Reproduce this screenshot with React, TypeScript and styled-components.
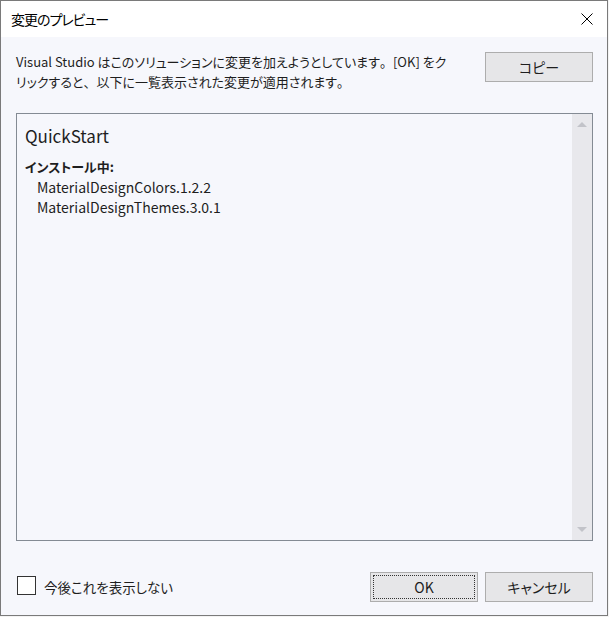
import * as React from 'react';
import styled, { createGlobalStyle } from 'styled-components';

const GlobalStyle = createGlobalStyle`
  html, body {
    margin: 0;
    padding: 0;
    background: #f3f3f3;
  }
  body {
    font-family: "Noto Sans CJK JP", "Noto Sans", sans-serif;
    font-feature-settings: "palt";
    color: #1e1e1e;
  }
`;

const Window = styled.div`
  box-sizing: border-box;
  width: 608px;
  height: 616px;
  border: 1px solid #7a7a7a;
  background: #f6f7fc;
  display: flex;
  flex-direction: column;
`;

const TitleBar = styled.div`
  height: 36px;
  background: #ffffff;
  display: flex;
  align-items: center;
  justify-content: space-between;
  padding-left: 10px;
`;

const Title = styled.div`
  font-size: 14px;
  letter-spacing: -1px;
  color: #000;
`;

const CloseButton = styled.div`
  width: 40px;
  height: 36px;
  display: flex;
  align-items: center;
  justify-content: center;
`;

const Body = styled.div`
  flex: 1;
  display: flex;
  flex-direction: column;
  padding: 16px 14px 14px 15px;
`;

const TopRow = styled.div`
  display: flex;
  justify-content: space-between;
  align-items: flex-start;
  height: 60px;
`;

const Description = styled.div`
  font-size: 13px;
  line-height: 20px;
  margin-top: -1px;
`;

// full-width punctuation, like the dialog font
const Punct = styled.span`
  font-feature-settings: normal;
`;

const Button = styled.button<{ focused?: boolean }>`
  box-sizing: border-box;
  width: 108px;
  height: 30px;
  border: 1px solid #adadad;
  background: #e6e6e8;
  font-family: inherit;
  font-feature-settings: "palt";
  font-size: 14px;
  color: #1e1e1e;
  padding: 0;
  outline: ${(p) => (p.focused ? '1px dotted #333' : 'none')};
  outline-offset: -4px;
`;

const Panel = styled.div`
  box-sizing: border-box;
  height: 428px;
  border: 1px solid #848b94;
  display: flex;
`;

const PanelContent = styled.div`
  flex: 1;
  padding: 9px 8px;
`;

const ProjectName = styled.div`
  font-size: 17px;
  line-height: 26px;
  margin-bottom: 8px;
`;

const SectionLabel = styled.div`
  font-size: 13px;
  font-weight: bold;
  line-height: 20px;
`;

const PackageItem = styled.div`
  font-size: 14px;
  line-height: 20px;
  padding-left: 12px;
`;

const ScrollBar = styled.div`
  width: 20px;
  background: #e8e8ec;
  display: flex;
  flex-direction: column;
  justify-content: space-between;
  align-items: center;
  padding: 8px 0;
`;

const Arrow = styled.div<{ down?: boolean }>`
  width: 0;
  height: 0;
  border-left: 5px solid transparent;
  border-right: 5px solid transparent;
  ${(p) =>
    p.down ? 'border-top: 5px solid #c2c3c9;' : 'border-bottom: 5px solid #c2c3c9;'}
`;

const BottomRow = styled.div`
  margin-top: 31px;
  display: flex;
  align-items: center;
  justify-content: space-between;
`;

const CheckLabel = styled.label`
  display: flex;
  align-items: center;
  gap: 8px;
  font-size: 13.5px;
`;

const CheckBox = styled.span`
  box-sizing: border-box;
  width: 19px;
  height: 19px;
  border: 1px solid #333;
  background: #fff;
  margin-left: 1px;
  margin-top: -3px;
`;

const ButtonGroup = styled.div`
  display: flex;
  gap: 7px;
  margin-right: 0;
`;

const App: React.FC = () => {
  return (
    <>
      <GlobalStyle />
      <Window>
        <TitleBar>
          <Title>変更のプレビュー</Title>
          <CloseButton>
            <svg width="12" height="12" viewBox="0 0 12 12">
              <path d="M0.5 0.5 L11.5 11.5 M11.5 0.5 L0.5 11.5" stroke="#000" strokeWidth="1" />
            </svg>
          </CloseButton>
        </TitleBar>
        <Body>
          <TopRow>
            <Description>
              Visual Studio はこのソリューションに変更を加えようとしています<Punct>。</Punct>[OK] をク
              <br />
              リックすると<Punct>、</Punct>以下に一覧表示された変更が適用されます<Punct>。</Punct>
            </Description>
            <Button style={{ marginTop: -1 }}>コピー</Button>
          </TopRow>
          <Panel>
            <PanelContent>
              <ProjectName>QuickStart</ProjectName>
              <SectionLabel>インストール中:</SectionLabel>
              <PackageItem>MaterialDesignColors.1.2.2</PackageItem>
              <PackageItem>MaterialDesignThemes.3.0.1</PackageItem>
            </PanelContent>
            <ScrollBar>
              <Arrow />
              <Arrow down />
            </ScrollBar>
          </Panel>
          <BottomRow>
            <CheckLabel>
              <CheckBox />
              今後これを表示しない
            </CheckLabel>
            <ButtonGroup>
              <Button focused>OK</Button>
              <Button>キャンセル</Button>
            </ButtonGroup>
          </BottomRow>
        </Body>
      </Window>
    </>
  );
};

export default App;
